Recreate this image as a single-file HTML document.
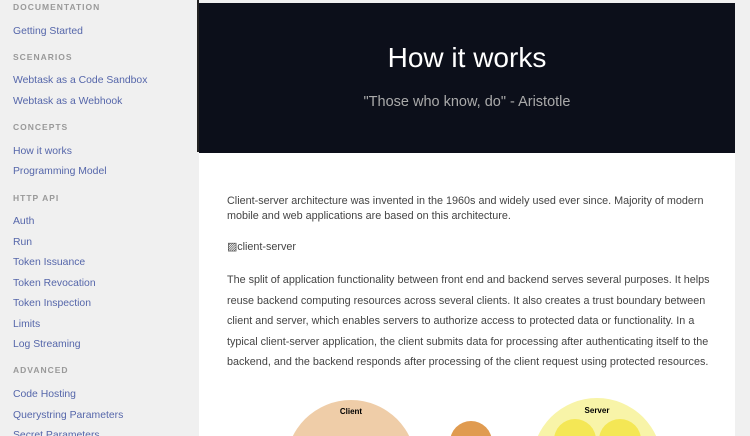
<!DOCTYPE html>
<html><head><style>
*{margin:0;padding:0;box-sizing:border-box}
html,body{width:750px;height:436px;overflow:hidden}
body{background:#f0f0f0;font-family:"Liberation Sans",sans-serif;position:relative}
.side{position:absolute;left:0;top:0;width:198px;height:436px;overflow:hidden}
.h{position:absolute;left:13px;font-size:8.5px;letter-spacing:1px;color:#999;font-weight:bold}
.l{position:absolute;left:13px;font-size:10.4px;color:#5566aa}
.sb{position:absolute;left:197px;top:0;width:2px;height:152px;background:#222}
.card{position:absolute;left:199px;top:3px;width:536px;height:433px;background:#fff;overflow:hidden}
.hero{height:150px;background:#0c0f1a;color:#fff;text-align:center}
.hero h1{font-weight:normal;font-size:28px;padding-top:39px}
.hero p{color:#aaa;font-size:14.5px;margin-top:20px}
.t{position:absolute;left:28px;width:505px;font-size:10.8px;color:#444;line-height:20.5px;white-space:nowrap}
</style></head><body>
<div class="side">
<div class="h" style="top:2px">DOCUMENTATION</div>
<div class="l" style="top:26px">Getting Started</div>
<div class="h" style="top:52px">SCENARIOS</div>
<div class="l" style="top:75px">Webtask as a Code Sandbox</div>
<div class="l" style="top:96px">Webtask as a Webhook</div>
<div class="h" style="top:122px">CONCEPTS</div>
<div class="l" style="top:146px">How it works</div>
<div class="l" style="top:166px">Programming Model</div>
<div class="h" style="top:193px">HTTP API</div>
<div class="l" style="top:216px">Auth</div>
<div class="l" style="top:237px">Run</div>
<div class="l" style="top:257px">Token Issuance</div>
<div class="l" style="top:278px">Token Revocation</div>
<div class="l" style="top:298px">Token Inspection</div>
<div class="l" style="top:319px">Limits</div>
<div class="l" style="top:339px">Log Streaming</div>
<div class="h" style="top:365px">ADVANCED</div>
<div class="l" style="top:389px">Code Hosting</div>
<div class="l" style="top:410px">Querystring Parameters</div>
<div class="l" style="top:430px">Secret Parameters</div>
</div>
<div class="sb"></div>
<div class="card">
<div class="hero"><h1>How it works</h1><p>"Those who know, do" - Aristotle</p></div>
<div class="t" style="top:191px;line-height:15px">Client-server architecture was invented in the 1960s and widely used ever since. Majority of modern<br>mobile and web applications are based on this architecture.</div>
<div class="t" style="top:234px">▨client-server</div>
<div class="t" style="top:267px">The split of application functionality between front end and backend serves several purposes. It helps<br>reuse backend computing resources across several clients. It also creates a trust boundary between<br>client and server, which enables servers to authorize access to protected data or functionality. In a<br>typical client-server application, the client submits data for processing after authenticating itself to the<br>backend, and the backend responds after processing of the client request using protected resources.</div>
</div>
<svg style="position:absolute;left:0;top:0" width="750" height="436">
<circle cx="351" cy="465" r="65" fill="#efcda8"/>
<text x="351" y="414" font-size="8" font-weight="bold" text-anchor="middle" font-family="Liberation Sans">Client</text>
<circle cx="471" cy="442" r="21" fill="#e09b50"/>
<circle cx="597" cy="463" r="65" fill="#f8f4a8"/>
<text x="597" y="413" font-size="8" font-weight="bold" text-anchor="middle" font-family="Liberation Sans">Server</text>
<circle cx="575" cy="440" r="21" fill="#f4e755"/>
<circle cx="620" cy="440" r="21" fill="#f4e755"/>
</svg>
</body></html>
